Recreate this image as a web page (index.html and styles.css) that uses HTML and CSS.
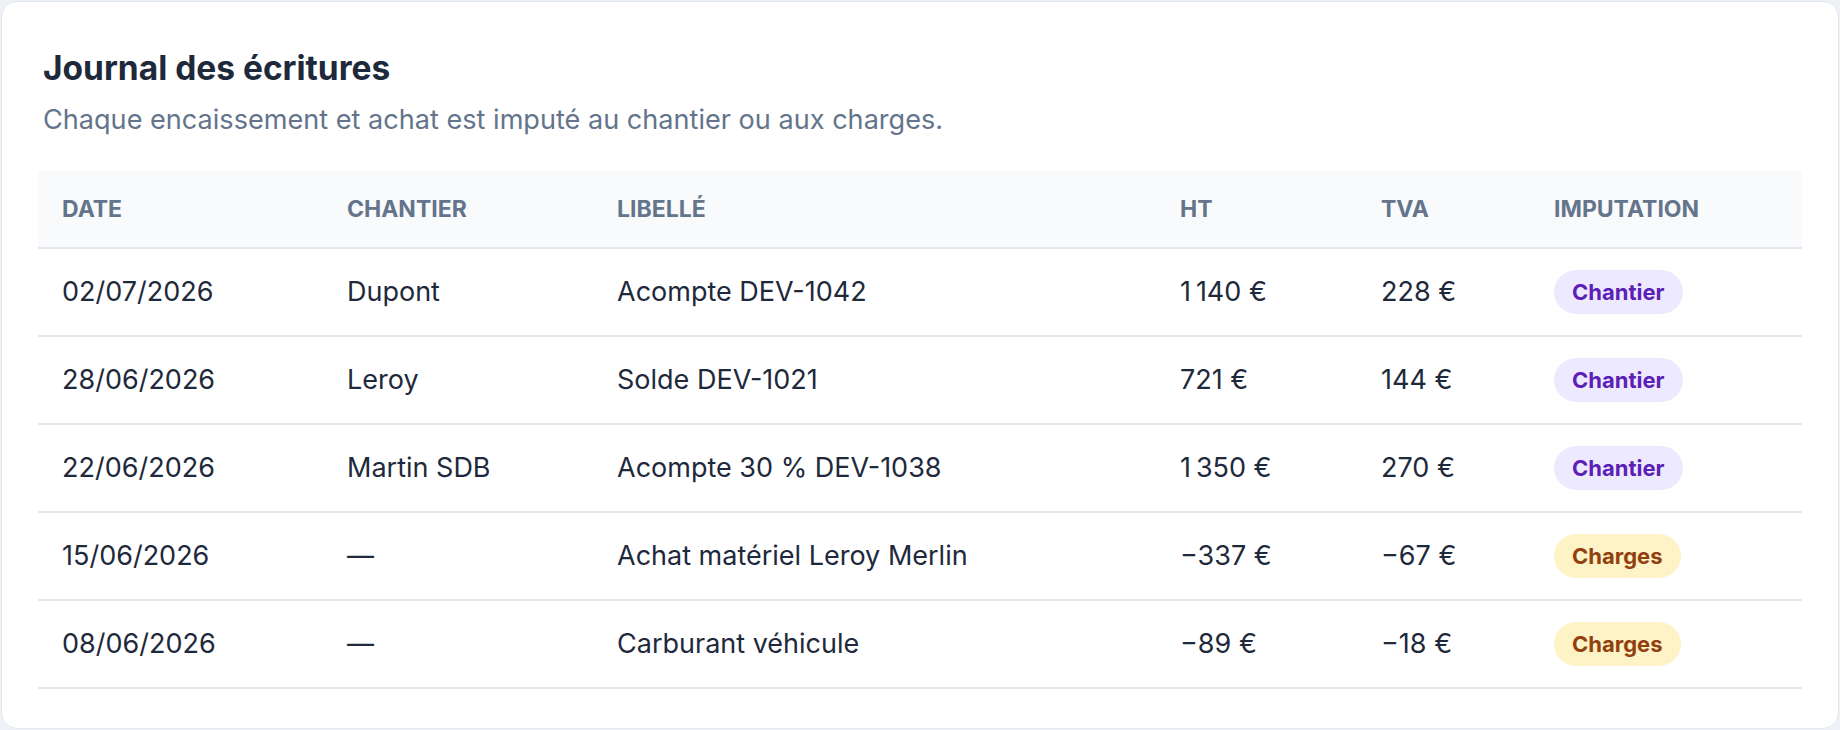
FILE: index.html
```html
<!DOCTYPE html>
<html lang="fr">
<head>
<meta charset="utf-8">
<title>Journal des écritures</title>
<link rel="stylesheet" href="styles.css">
</head>
<body>
<section class="card">
  <h2 class="title">Journal des écritures</h2>
  <p class="subtitle">Chaque encaissement et achat est imputé au chantier ou aux charges.</p>
  <table class="journal">
    <colgroup>
      <col class="c-date"><col class="c-chantier"><col class="c-libelle"><col class="c-ht"><col class="c-tva"><col class="c-imp">
    </colgroup>
    <thead>
      <tr><th>Date</th><th>Chantier</th><th>Libellé</th><th>HT</th><th>TVA</th><th>Imputation</th></tr>
    </thead>
    <tbody>
      <tr><td>02/07/2026</td><td>Dupont</td><td>Acompte DEV-1042</td><td>1&#8239;140&nbsp;€</td><td>228&nbsp;€</td><td><span class="badge badge-chantier">Chantier</span></td></tr>
      <tr><td>28/06/2026</td><td>Leroy</td><td>Solde DEV-1021</td><td>721&nbsp;€</td><td>144&nbsp;€</td><td><span class="badge badge-chantier">Chantier</span></td></tr>
      <tr><td>22/06/2026</td><td>Martin SDB</td><td>Acompte 30&nbsp;% DEV-1038</td><td>1&#8239;350&nbsp;€</td><td>270&nbsp;€</td><td><span class="badge badge-chantier">Chantier</span></td></tr>
      <tr><td>15/06/2026</td><td>—</td><td>Achat matériel Leroy Merlin</td><td>−337&nbsp;€</td><td>−67&nbsp;€</td><td><span class="badge badge-charges">Charges</span></td></tr>
      <tr><td>08/06/2026</td><td>—</td><td>Carburant véhicule</td><td>−89&nbsp;€</td><td>−18&nbsp;€</td><td><span class="badge badge-charges">Charges</span></td></tr>
    </tbody>
  </table>
</section>
</body>
</html>
```
FILE: styles.css
```css
html, body {
  margin: 0;
  padding: 0;
}
body {
  background: #eef1f6;
  padding: 1px;
  font-family: Inter, "Noto Sans", sans-serif;
  color: #1e293b;
  box-sizing: border-box;
  height: 730px;
}
.card {
  box-sizing: border-box;
  height: 728px;
  background: #ffffff;
  border: 1px solid #e2e8f0;
  border-radius: 16px;
  padding: 46px 36px 40px 36px;
}
.title {
  margin: 0 0 0 5px;
  font-size: 33.5px;
  line-height: 40px;
  font-weight: 700;
  color: #1e293b;
}
.subtitle {
  margin: 14px 0 0 5px;
  font-size: 27.1px;
  line-height: 36px;
  color: #64748b;
}
.journal {
  margin-top: 33px;
  width: 100%;
  border-collapse: collapse;
  table-layout: fixed;
}
.c-date { width: 285px; }
.c-chantier { width: 270px; }
.c-libelle { width: 563px; }
.c-ht { width: 201px; }
.c-tva { width: 173px; }
.c-imp { width: 272px; }
.journal th {
  background: #f8fafc;
  text-align: left;
  font-size: 23px;
  line-height: 32px;
  font-weight: 700;
  text-transform: uppercase;
  color: #64748b;
  padding: 22px 24px;
  border-bottom: 2px solid #e2e8f0;
}
.journal td {
  height: 88px;
  box-sizing: border-box;
  font-size: 27px;
  line-height: 40px;
  padding: 0 24px;
  vertical-align: middle;
  border-bottom: 2px solid #e2e8f0;
  white-space: nowrap;
}
.badge {
  display: inline-block;
  font-size: 22px;
  line-height: 44px;
  height: 44px;
  font-weight: 650;
  padding: 0 18px;
  border-radius: 22px;
  vertical-align: middle;
}
.badge-chantier {
  background: #ede9fe;
  color: #5b21b6;
}
.badge-charges {
  background: #fef3c7;
  color: #92400e;
}
```
